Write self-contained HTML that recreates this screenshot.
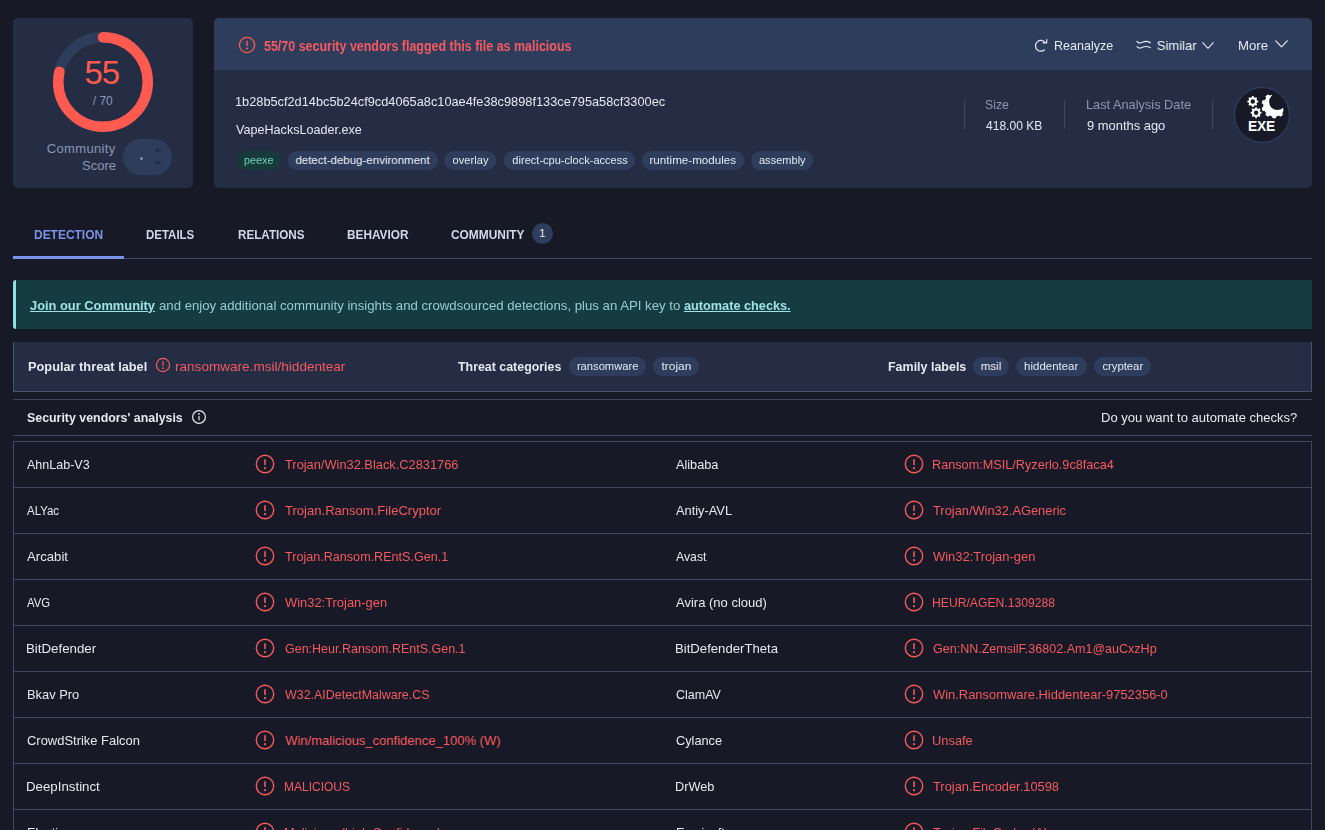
<!DOCTYPE html>
<html lang="en">
<head>
<meta charset="utf-8">
<title>VirusTotal - File - 1b28b5cf2d14bc5b24cf9cd4065a8c10ae4fe38c9898f133ce795a58cf3300ec</title>
<style>
*{box-sizing:border-box;margin:0;padding:0}
html,body{width:1325px;height:830px;overflow:hidden;background:#181926}
body{font-family:"Liberation Sans",sans-serif;font-size:13px;color:#e6e9f2;position:relative}
.abs{position:absolute;white-space:nowrap}
.t{position:absolute;white-space:nowrap;line-height:16px;height:16px;transform-origin:0 50%}
.b{font-weight:bold}
.red{color:#f45a60}
.muted{color:#8c97b4}
.tabc{color:#d3d8e8}
.tabc.act{color:#7b93e6}
.bnl{color:#9fe3e8;text-decoration:underline}
.bnt{color:#95cdd0}
#score{left:13px;top:18.3px;width:179.8px;height:169.7px;background:#252d45;border-radius:5px}
#main{left:214.4px;top:18.3px;width:1097.4px;height:169.7px;background:#252d45;border-radius:5px}
#mainhdr{left:214.4px;top:18.3px;width:1097.4px;height:51.7px;background:#2f3d5c;border-radius:5px 5px 0 0}
.chip{position:absolute;height:19.5px;line-height:19.5px;border-radius:10px;background:#2f3d5c;color:#e6e9f2;font-size:11.5px;text-align:center;white-space:nowrap}
.chip span{display:inline-block;transform-origin:50% 50%}
.chip.g{background:#173a3c;color:#6fd1b6}
.vdiv{position:absolute;width:1px;background:#3b486a}
.rowline{position:absolute;left:13px;width:1299px;height:1px;background:#444762}
</style>
</head>
<body>

<!-- score card -->
<div id="score" class="abs"></div>
<svg class="abs" style="left:50px;top:28.6px" width="106" height="106" viewBox="0 0 106 106">
  <circle cx="53" cy="53" r="44.75" fill="none" stroke="#2f3d5c" stroke-width="10.5"/>
  <circle cx="53" cy="53" r="44.75" fill="none" stroke="#ff5a50" stroke-width="10.5" stroke-linecap="round" stroke-dasharray="220.9 281.2" transform="rotate(-90 53 53)"/>
</svg>
<div class="abs" id="big55" style="color:#ff5a50;left:61.8px;top:54.6px;width:80px;text-align:center;font-size:33px;line-height:36px;letter-spacing:-1px">55</div>
<div class="abs muted" id="of70" style="left:62.8px;top:93.4px;width:80px;text-align:center;font-size:12px;line-height:16px">/ 70</div>
<div class="abs muted" id="cs1" style="left:26px;top:140px;width:90px;text-align:right;font-size:13px;line-height:17px;letter-spacing:.35px;margin-left:-.35px">Community</div>
<div class="abs muted" id="cs2" style="left:33px;top:157px;width:83px;text-align:right;font-size:13px;line-height:17px">Score</div>
<div class="abs" style="left:123px;top:138.8px;width:49px;height:36px;border-radius:18px;background:#2f3d5c"></div>
<svg class="abs" style="left:123px;top:138.8px" width="49" height="36" viewBox="0 0 49 36"><circle cx="18.4" cy="19.6" r="1.4" fill="#8a98c2"/><path d="M30.5 12.6 L34.75 8.4 L39 12.6Z M30.5 22 L39 22 L34.75 26.2Z" fill="#232d52"/></svg>

<!-- main card -->
<div id="main" class="abs"></div>
<div id="mainhdr" class="abs"></div>
<svg class="abs" style="left:237.5px;top:35.6px" width="18" height="18" viewBox="0 0 18 18">
  <circle cx="9" cy="9" r="7.6" fill="none" stroke="#ff5a50" stroke-width="1.3"/>
  <rect x="8.3" y="4.6" width="1.4" height="5.6" rx=".7" fill="#ff5a50"/>
  <circle cx="9" cy="12.6" r="1" fill="#ff5a50"/>
</svg>
<div class="t b red" id="hdrtxt" style="left:264.00px;top:37.50px;font-size:14px;transform:scaleX(0.8899)">55/70 security vendors flagged this file as malicious</div>
<svg class="abs" style="left:1033px;top:37.5px" width="16" height="16" viewBox="0 0 16 16" fill="none" stroke="#e6e9f2" stroke-width="1.2" stroke-linecap="round" stroke-linejoin="round">
  <path d="M12.04 4.33 A5.4 5.4 0 1 0 11.37 11.94"/>
  <path d="M10 4.8 L13.7 4.8 L13.7 1.6"/>
</svg>
<div class="t" id="a1" style="left:1054.20px;top:37.50px;font-size:13px;transform:scaleX(0.9626)">Reanalyze</div>
<svg class="abs" style="left:1136px;top:40px" width="16" height="10" viewBox="0 0 16 10" fill="none" stroke="#e6e9f2" stroke-width="1.2" stroke-linecap="round">
  <path d="M1 1.5 C2.6 3.3 4.6 3.2 6.6 2.2 C8.6 1.2 11 .9 14.4 2.6"/>
  <path d="M1 6.6 C2.6 8.4 4.6 8.3 6.6 7.3 C8.6 6.3 11 6 14.4 7.7"/>
</svg>
<div class="t" id="a2" style="left:1156.80px;top:37.50px;font-size:13px">Similar</div>
<svg class="abs" style="left:1202px;top:42.3px" width="12" height="7.4" viewBox="0 0 13 8" fill="none" stroke="#e6e9f2" stroke-width="1.2" stroke-linecap="round" stroke-linejoin="round"><path d="M.8 .8 L6.5 6.8 L12.2 .8"/></svg>
<div class="t" id="a3" style="left:1237.80px;top:37.50px;font-size:13px;transform:scaleX(1.0154)">More</div>
<svg class="abs" style="left:1275.2px;top:39.8px" width="13" height="8" viewBox="0 0 13 8" fill="none" stroke="#e6e9f2" stroke-width="1.2" stroke-linecap="round" stroke-linejoin="round"><path d="M.8 .8 L6.5 6.8 L12.2 .8"/></svg>

<div class="t" id="hash" style="left:235.20px;top:93.50px;font-size:13px;transform:scaleX(0.9819)">1b28b5cf2d14bc5b24cf9cd4065a8c10ae4fe38c9898f133ce795a58cf3300ec</div>
<div class="t" id="fname" style="left:236.00px;top:121.50px;font-size:13px;transform:scaleX(0.9692)">VapeHacksLoader.exe</div>
<div class="chip g" id="c1" style="left:237.0px;top:150.75px;width:42.5px"><span style="transform:scaleX(0.9423)">peexe</span></div>
<div class="chip" id="c2" style="left:287.5px;top:150.75px;width:150.0px"><span>detect-debug-environment</span></div>
<div class="chip" id="c3" style="left:444.3px;top:150.75px;width:52.2px"><span style="transform:scaleX(0.9693)">overlay</span></div>
<div class="chip" id="c4" style="left:503.7px;top:150.75px;width:131.8px"><span style="transform:scaleX(0.9605)">direct-cpu-clock-access</span></div>
<div class="chip" id="c5" style="left:642.3px;top:150.75px;width:102.0px"><span style="transform:scaleX(1.0118)">runtime-modules</span></div>
<div class="chip" id="c6" style="left:751.3px;top:150.75px;width:62.0px"><span style="transform:scaleX(0.9601)">assembly</span></div>
<div class="vdiv" style="left:964px;top:100px;height:29px"></div>
<div class="t muted" id="m1" style="left:985.00px;top:96.50px;font-size:13px;transform:scaleX(0.9437)">Size</div>
<div class="t" id="m2" style="left:986.00px;top:117.50px;font-size:13px;transform:scaleX(0.9267)">418.00 KB</div>
<div class="vdiv" style="left:1064px;top:100px;height:29px"></div>
<div class="t muted" id="m3" style="left:1086.00px;top:96.50px;font-size:13px;transform:scaleX(0.9822)">Last Analysis Date</div>
<div class="t" id="m4" style="left:1087.00px;top:117.50px;font-size:13px;transform:scaleX(0.9939)">9 months ago</div>
<div class="vdiv" style="left:1212px;top:100px;height:29px"></div>

<!-- EXE icon -->
<svg class="abs" style="left:1232px;top:85px" width="60" height="60" viewBox="0 0 60 60">
  <defs>
    <mask id="gm"><rect width="60" height="60" fill="#fff"/><circle cx="45.3" cy="16.9" r="8.2" fill="#000"/><path d="M39.6 10 L51.3 23.6 L51.3 60 L60 60 L60 0 L39.6 0Z" fill="#000"/></mask>
    <path id="sg" d="M4.18 -1.00 L5.45 -0.73 L5.45 0.73 L4.18 1.00 L3.67 2.25 L4.37 3.34 L3.34 4.37 L2.25 3.67 L1.00 4.18 L0.73 5.45 L-0.73 5.45 L-1.00 4.18 L-2.25 3.67 L-3.34 4.37 L-4.37 3.34 L-3.67 2.25 L-4.18 1.00 L-5.45 0.73 L-5.45 -0.73 L-4.18 -1.00 L-3.67 -2.25 L-4.37 -3.34 L-3.34 -4.37 L-2.25 -3.67 L-1.00 -4.18 L-0.73 -5.45 L0.73 -5.45 L1.00 -4.18 L2.25 -3.67 L3.34 -4.37 L4.37 -3.34 L3.67 -2.25Z"/>
  </defs>
  <circle cx="30" cy="30" r="27.4" fill="#181926" stroke="#36426a" stroke-width="1"/>
  <g fill="#fff">
    <use href="#sg" x="20.8" y="16.5"/>
    <use href="#sg" x="24.1" y="27.7"/>
    <g mask="url(#gm)"><path transform="translate(42.2 20.6)" d="M10.93 1.24 L12.57 2.40 L11.58 5.45 L9.57 5.42 L8.11 7.43 L8.76 9.33 L6.17 11.22 L4.56 10.01 L2.20 10.78 L1.60 12.70 L-1.60 12.70 L-2.20 10.78 L-4.56 10.01 L-6.17 11.22 L-8.76 9.33 L-8.11 7.43 L-9.57 5.42 L-11.58 5.45 L-12.57 2.40 L-10.93 1.24 L-10.93 -1.24 L-12.57 -2.40 L-11.58 -5.45 L-9.57 -5.42 L-8.11 -7.43 L-8.76 -9.33 L-6.17 -11.22 L-4.56 -10.01 L-2.20 -10.78 L-1.60 -12.70 L1.60 -12.70 L2.20 -10.78 L4.56 -10.01 L6.17 -11.22 L8.76 -9.33 L8.11 -7.43 L9.57 -5.42 L11.58 -5.45 L12.57 -2.40 L10.93 -1.24Z"/></g>
  </g>
  <circle cx="20.8" cy="16.5" r="2.2" fill="#181926"/>
  <circle cx="24.1" cy="27.7" r="2.2" fill="#181926"/>
  <text x="29.6" y="46.3" text-anchor="middle" font-family="Liberation Sans, sans-serif" font-weight="bold" font-size="13.8" letter-spacing="-.15" fill="#fff">EXE</text>
</svg>

<!-- tabs -->
<div class="t b tabc act" id="tab1" style="left:34.00px;top:226.50px;font-size:13px;transform:scaleX(0.9200)">DETECTION</div>
<div class="t b tabc" id="tab2" style="left:146.00px;top:226.50px;font-size:13px;transform:scaleX(0.8824)">DETAILS</div>
<div class="t b tabc" id="tab3" style="left:237.80px;top:226.50px;font-size:13px;transform:scaleX(0.8975)">RELATIONS</div>
<div class="t b tabc" id="tab4" style="left:346.80px;top:226.50px;font-size:13px;transform:scaleX(0.9093)">BEHAVIOR</div>
<div class="t b tabc" id="tab5" style="left:450.80px;top:226.50px;font-size:13px;transform:scaleX(0.9157)">COMMUNITY</div>
<div class="abs" style="left:531.7px;top:223px;width:21px;height:21px;border-radius:10.5px;background:#2f3d5c;color:#e6e9f2;font-size:11px;line-height:21px;text-align:center">1</div>
<div class="abs" style="left:13px;top:258px;width:1299px;height:1px;background:#444762"></div>
<div class="abs" style="left:13px;top:256px;width:111px;height:3px;background:#7b93e6"></div>

<!-- community banner -->
<div class="abs" style="left:13px;top:280px;width:1299px;height:49px;background:#143c41;border-left:3px solid #8fe0e3;border-radius:3px 0 0 3px"></div>
<div class="t b bnl" id="bn1" style="left:30.00px;top:297.50px;font-size:13px;transform:scaleX(0.9892)">Join our Community</div>
<div class="t bnt" id="bn2" style="left:159.00px;top:297.50px;font-size:13px;transform:scaleX(1.0146)">and enjoy additional community insights and crowdsourced detections, plus an API key to</div>
<div class="t b bnl" id="bn3" style="left:684.00px;top:297.50px;font-size:13px;transform:scaleX(0.9772)">automate checks.</div>

<!-- threat labels -->
<div class="abs" style="left:13px;top:342px;width:1299px;height:50px;background:#252d45;border:1px solid #4a5075;border-top:none"></div>
<div class="t b" id="th1" style="left:28.00px;top:358.50px;font-size:13px;transform:scaleX(0.9827)">Popular threat label</div>
<svg class="abs" style="left:155.3px;top:357.4px" width="16" height="16" viewBox="0 0 16 16"><circle cx="8" cy="8" r="6.6" fill="none" stroke="#f6595e" stroke-width="1.2"/><rect x="7.4" y="4" width="1.2" height="5" rx=".6" fill="#f6595e"/><circle cx="8" cy="11.2" r=".9" fill="#f6595e"/></svg>
<div class="t red" id="th2" style="left:175.20px;top:358.50px;font-size:13px;transform:scaleX(1.0434)">ransomware.msil/hiddentear</div>
<div class="t b" id="th3" style="left:457.80px;top:358.50px;font-size:13px;transform:scaleX(0.9534)">Threat categories</div>
<div class="chip" id="c7" style="left:569.0px;top:356.55px;width:77.3px"><span style="transform:scaleX(0.9723)">ransomware</span></div>
<div class="chip" id="c8" style="left:653.0px;top:356.55px;width:46.0px"><span style="transform:scaleX(1.0345)">trojan</span></div>
<div class="t b" id="th4" style="left:888.20px;top:358.50px;font-size:13px;transform:scaleX(0.9587)">Family labels</div>
<div class="chip" id="c9" style="left:973.0px;top:356.55px;width:36.0px"><span>msil</span></div>
<div class="chip" id="c10" style="left:1016.0px;top:356.55px;width:70.7px"><span style="transform:scaleX(0.9965)">hiddentear</span></div>
<div class="chip" id="c11" style="left:1094.2px;top:356.55px;width:56.8px"><span style="transform:scaleX(0.9818)">cryptear</span></div>

<!-- analysis header -->
<div class="rowline" style="top:399px"></div>
<div class="rowline" style="top:435px"></div>
<div class="t b" id="sv1" style="left:26.80px;top:409.50px;font-size:13px;transform:scaleX(0.9525)">Security vendors' analysis</div>
<svg class="abs" style="left:191.1px;top:408.6px" width="16" height="16" viewBox="0 0 16 16"><circle cx="8" cy="8" r="6.4" fill="none" stroke="#e6e9f2" stroke-width="1.2"/><rect x="7.4" y="7" width="1.2" height="4.4" rx=".6" fill="#e6e9f2"/><circle cx="8" cy="4.9" r=".85" fill="#e6e9f2"/></svg>
<div class="t" id="sv2" style="left:1101.00px;top:409.50px;font-size:13px;transform:scaleX(1.0026)">Do you want to automate checks?</div>

<!-- vendor table -->
<div class="abs" style="left:13px;top:441px;width:1px;height:389px;background:#444762"></div>
<div class="abs" style="left:1311px;top:441px;width:1px;height:389px;background:#444762"></div>
<div class="rowline" style="top:441px"></div>
<svg class="abs" style="left:255px;top:454.2px" width="20" height="20" viewBox="0 0 20 20"><circle cx="10" cy="10" r="8.7" fill="none" stroke="#f6595e" stroke-width="1.4"/><rect x="9.2" y="5.1" width="1.6" height="6.2" rx=".8" fill="#f6595e"/><circle cx="10" cy="14.2" r="1.1" fill="#f6595e"/></svg>
<svg class="abs" style="left:904px;top:454.2px" width="20" height="20" viewBox="0 0 20 20"><circle cx="10" cy="10" r="8.7" fill="none" stroke="#f6595e" stroke-width="1.4"/><rect x="9.2" y="5.1" width="1.6" height="6.2" rx=".8" fill="#f6595e"/><circle cx="10" cy="14.2" r="1.1" fill="#f6595e"/></svg>
<div class="t" id="v0a" style="left:27.00px;top:456.70px;font-size:13px;transform:scaleX(0.9629)">AhnLab-V3</div>
<div class="t red" id="r0a" style="left:285.20px;top:456.70px;font-size:13px;transform:scaleX(0.9864)">Trojan/Win32.Black.C2831766</div>
<div class="t" id="v0b" style="left:676.20px;top:456.70px;font-size:13px;transform:scaleX(0.9773)">Alibaba</div>
<div class="t red" id="r0b" style="left:932.00px;top:456.70px;font-size:13px;transform:scaleX(0.9753)">Ransom:MSIL/Ryzerlo.9c8faca4</div>
<div class="rowline" style="top:487px"></div>
<svg class="abs" style="left:255px;top:500.2px" width="20" height="20" viewBox="0 0 20 20"><circle cx="10" cy="10" r="8.7" fill="none" stroke="#f6595e" stroke-width="1.4"/><rect x="9.2" y="5.1" width="1.6" height="6.2" rx=".8" fill="#f6595e"/><circle cx="10" cy="14.2" r="1.1" fill="#f6595e"/></svg>
<svg class="abs" style="left:904px;top:500.2px" width="20" height="20" viewBox="0 0 20 20"><circle cx="10" cy="10" r="8.7" fill="none" stroke="#f6595e" stroke-width="1.4"/><rect x="9.2" y="5.1" width="1.6" height="6.2" rx=".8" fill="#f6595e"/><circle cx="10" cy="14.2" r="1.1" fill="#f6595e"/></svg>
<div class="t" id="v1a" style="left:27.00px;top:502.70px;font-size:13px;transform:scaleX(0.8796)">ALYac</div>
<div class="t red" id="r1a" style="left:285.20px;top:502.70px;font-size:13px;transform:scaleX(1.0039)">Trojan.Ransom.FileCryptor</div>
<div class="t" id="v1b" style="left:676.20px;top:502.70px;font-size:13px;transform:scaleX(0.9853)">Antiy-AVL</div>
<div class="t red" id="r1b" style="left:933.00px;top:502.70px;font-size:13px;transform:scaleX(0.9875)">Trojan/Win32.AGeneric</div>
<div class="rowline" style="top:533px"></div>
<svg class="abs" style="left:255px;top:546.2px" width="20" height="20" viewBox="0 0 20 20"><circle cx="10" cy="10" r="8.7" fill="none" stroke="#f6595e" stroke-width="1.4"/><rect x="9.2" y="5.1" width="1.6" height="6.2" rx=".8" fill="#f6595e"/><circle cx="10" cy="14.2" r="1.1" fill="#f6595e"/></svg>
<svg class="abs" style="left:904px;top:546.2px" width="20" height="20" viewBox="0 0 20 20"><circle cx="10" cy="10" r="8.7" fill="none" stroke="#f6595e" stroke-width="1.4"/><rect x="9.2" y="5.1" width="1.6" height="6.2" rx=".8" fill="#f6595e"/><circle cx="10" cy="14.2" r="1.1" fill="#f6595e"/></svg>
<div class="t" id="v2a" style="left:27.00px;top:548.70px;font-size:13px;transform:scaleX(1.0131)">Arcabit</div>
<div class="t red" id="r2a" style="left:285.20px;top:548.70px;font-size:13px;transform:scaleX(0.9687)">Trojan.Ransom.REntS.Gen.1</div>
<div class="t" id="v2b" style="left:676.20px;top:548.70px;font-size:13px;transform:scaleX(0.9439)">Avast</div>
<div class="t red" id="r2b" style="left:933.00px;top:548.70px;font-size:13px;transform:scaleX(0.9953)">Win32:Trojan-gen</div>
<div class="rowline" style="top:579px"></div>
<svg class="abs" style="left:255px;top:592.2px" width="20" height="20" viewBox="0 0 20 20"><circle cx="10" cy="10" r="8.7" fill="none" stroke="#f6595e" stroke-width="1.4"/><rect x="9.2" y="5.1" width="1.6" height="6.2" rx=".8" fill="#f6595e"/><circle cx="10" cy="14.2" r="1.1" fill="#f6595e"/></svg>
<svg class="abs" style="left:904px;top:592.2px" width="20" height="20" viewBox="0 0 20 20"><circle cx="10" cy="10" r="8.7" fill="none" stroke="#f6595e" stroke-width="1.4"/><rect x="9.2" y="5.1" width="1.6" height="6.2" rx=".8" fill="#f6595e"/><circle cx="10" cy="14.2" r="1.1" fill="#f6595e"/></svg>
<div class="t" id="v3a" style="left:27.00px;top:594.70px;font-size:13px;transform:scaleX(0.8738)">AVG</div>
<div class="t red" id="r3a" style="left:285.20px;top:594.70px;font-size:13px;transform:scaleX(0.9924)">Win32:Trojan-gen</div>
<div class="t" id="v3b" style="left:676.20px;top:594.70px;font-size:13px;transform:scaleX(1.0013)">Avira (no cloud)</div>
<div class="t red" id="r3b" style="left:932.00px;top:594.70px;font-size:13px;transform:scaleX(0.9352)">HEUR/AGEN.1309288</div>
<div class="rowline" style="top:625px"></div>
<svg class="abs" style="left:255px;top:638.2px" width="20" height="20" viewBox="0 0 20 20"><circle cx="10" cy="10" r="8.7" fill="none" stroke="#f6595e" stroke-width="1.4"/><rect x="9.2" y="5.1" width="1.6" height="6.2" rx=".8" fill="#f6595e"/><circle cx="10" cy="14.2" r="1.1" fill="#f6595e"/></svg>
<svg class="abs" style="left:904px;top:638.2px" width="20" height="20" viewBox="0 0 20 20"><circle cx="10" cy="10" r="8.7" fill="none" stroke="#f6595e" stroke-width="1.4"/><rect x="9.2" y="5.1" width="1.6" height="6.2" rx=".8" fill="#f6595e"/><circle cx="10" cy="14.2" r="1.1" fill="#f6595e"/></svg>
<div class="t" id="v4a" style="left:26.00px;top:640.70px;font-size:13px;transform:scaleX(1.0224)">BitDefender</div>
<div class="t red" id="r4a" style="left:285.20px;top:640.70px;font-size:13px;transform:scaleX(0.9607)">Gen:Heur.Ransom.REntS.Gen.1</div>
<div class="t" id="v4b" style="left:675.20px;top:640.70px;font-size:13px;transform:scaleX(1.0109)">BitDefenderTheta</div>
<div class="t red" id="r4b" style="left:933.00px;top:640.70px;font-size:13px;transform:scaleX(0.9634)">Gen:NN.ZemsilF.36802.Am1@auCxzHp</div>
<div class="rowline" style="top:671px"></div>
<svg class="abs" style="left:255px;top:684.2px" width="20" height="20" viewBox="0 0 20 20"><circle cx="10" cy="10" r="8.7" fill="none" stroke="#f6595e" stroke-width="1.4"/><rect x="9.2" y="5.1" width="1.6" height="6.2" rx=".8" fill="#f6595e"/><circle cx="10" cy="14.2" r="1.1" fill="#f6595e"/></svg>
<svg class="abs" style="left:904px;top:684.2px" width="20" height="20" viewBox="0 0 20 20"><circle cx="10" cy="10" r="8.7" fill="none" stroke="#f6595e" stroke-width="1.4"/><rect x="9.2" y="5.1" width="1.6" height="6.2" rx=".8" fill="#f6595e"/><circle cx="10" cy="14.2" r="1.1" fill="#f6595e"/></svg>
<div class="t" id="v5a" style="left:27.00px;top:686.70px;font-size:13px;transform:scaleX(0.9909)">Bkav Pro</div>
<div class="t red" id="r5a" style="left:285.20px;top:686.70px;font-size:13px;transform:scaleX(0.9570)">W32.AIDetectMalware.CS</div>
<div class="t" id="v5b" style="left:676.20px;top:686.70px;font-size:13px;transform:scaleX(0.9603)">ClamAV</div>
<div class="t red" id="r5b" style="left:933.00px;top:686.70px;font-size:13px;transform:scaleX(0.9937)">Win.Ransomware.Hiddentear-9752356-0</div>
<div class="rowline" style="top:717px"></div>
<svg class="abs" style="left:255px;top:730.2px" width="20" height="20" viewBox="0 0 20 20"><circle cx="10" cy="10" r="8.7" fill="none" stroke="#f6595e" stroke-width="1.4"/><rect x="9.2" y="5.1" width="1.6" height="6.2" rx=".8" fill="#f6595e"/><circle cx="10" cy="14.2" r="1.1" fill="#f6595e"/></svg>
<svg class="abs" style="left:904px;top:730.2px" width="20" height="20" viewBox="0 0 20 20"><circle cx="10" cy="10" r="8.7" fill="none" stroke="#f6595e" stroke-width="1.4"/><rect x="9.2" y="5.1" width="1.6" height="6.2" rx=".8" fill="#f6595e"/><circle cx="10" cy="14.2" r="1.1" fill="#f6595e"/></svg>
<div class="t" id="v6a" style="left:27.00px;top:732.70px;font-size:13px;transform:scaleX(0.9961)">CrowdStrike Falcon</div>
<div class="t red" id="r6a" style="left:285.20px;top:732.70px;font-size:13px">Win/malicious_confidence_100% (W)</div>
<div class="t" id="v6b" style="left:676.20px;top:732.70px;font-size:13px;transform:scaleX(0.9815)">Cylance</div>
<div class="t red" id="r6b" style="left:932.00px;top:732.70px;font-size:13px;transform:scaleX(0.9897)">Unsafe</div>
<div class="rowline" style="top:763px"></div>
<svg class="abs" style="left:255px;top:776.2px" width="20" height="20" viewBox="0 0 20 20"><circle cx="10" cy="10" r="8.7" fill="none" stroke="#f6595e" stroke-width="1.4"/><rect x="9.2" y="5.1" width="1.6" height="6.2" rx=".8" fill="#f6595e"/><circle cx="10" cy="14.2" r="1.1" fill="#f6595e"/></svg>
<svg class="abs" style="left:904px;top:776.2px" width="20" height="20" viewBox="0 0 20 20"><circle cx="10" cy="10" r="8.7" fill="none" stroke="#f6595e" stroke-width="1.4"/><rect x="9.2" y="5.1" width="1.6" height="6.2" rx=".8" fill="#f6595e"/><circle cx="10" cy="14.2" r="1.1" fill="#f6595e"/></svg>
<div class="t" id="v7a" style="left:26.00px;top:778.70px;font-size:13px;transform:scaleX(1.0211)">DeepInstinct</div>
<div class="t red" id="r7a" style="left:284.20px;top:778.70px;font-size:13px;transform:scaleX(0.9231)">MALICIOUS</div>
<div class="t" id="v7b" style="left:675.20px;top:778.70px;font-size:13px;transform:scaleX(0.9784)">DrWeb</div>
<div class="t red" id="r7b" style="left:933.00px;top:778.70px;font-size:13px;transform:scaleX(0.9884)">Trojan.Encoder.10598</div>
<div class="rowline" style="top:809px"></div>
<svg class="abs" style="left:255px;top:822.2px" width="20" height="20" viewBox="0 0 20 20"><circle cx="10" cy="10" r="8.7" fill="none" stroke="#f6595e" stroke-width="1.4"/><rect x="9.2" y="5.1" width="1.6" height="6.2" rx=".8" fill="#f6595e"/><circle cx="10" cy="14.2" r="1.1" fill="#f6595e"/></svg>
<svg class="abs" style="left:904px;top:822.2px" width="20" height="20" viewBox="0 0 20 20"><circle cx="10" cy="10" r="8.7" fill="none" stroke="#f6595e" stroke-width="1.4"/><rect x="9.2" y="5.1" width="1.6" height="6.2" rx=".8" fill="#f6595e"/><circle cx="10" cy="14.2" r="1.1" fill="#f6595e"/></svg>
<div class="t" id="v8a" style="left:27.00px;top:824.70px;font-size:13px;transform:scaleX(0.9800)">Elastic</div>
<div class="t red" id="r8a" style="left:284.30px;top:824.70px;font-size:13px;transform:scaleX(0.9800)">Malicious (high Confidence)</div>
<div class="t" id="v8b" style="left:675.80px;top:824.70px;font-size:13px;transform:scaleX(0.9800)">Emsisoft</div>
<div class="t red" id="r8b" style="left:933.00px;top:824.70px;font-size:13px;transform:scaleX(0.9800)">Trojan.FileCoder (A)</div>

</body>
</html>
